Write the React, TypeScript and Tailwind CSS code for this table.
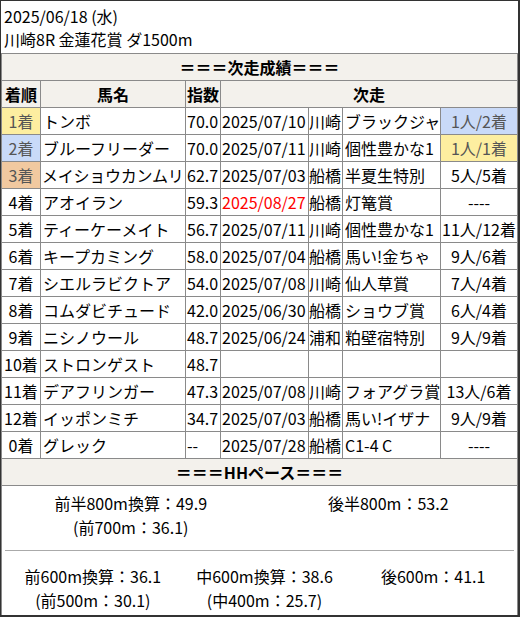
import React from "react";

type Row = {
  rank: string;
  rankBg?: string;
  name: string;
  tight?: boolean;
  idx: string;
  date: string;
  dateRed?: boolean;
  venue: string;
  race: string;
  result: string;
  resBg?: string;
};

const rows: Row[] = [
  { rank: "1着", rankBg: "bg-[#fdeea0] text-[#555]", name: "トンボ", idx: "70.0", date: "2025/07/10", venue: "川崎", race: "ブラックジャ", result: "1人/2着", resBg: "bg-[#c9daf8] text-[#555]" },
  { rank: "2着", rankBg: "bg-[#c9daf8] text-[#555]", name: "ブルーフリーダー", idx: "70.0", date: "2025/07/11", venue: "川崎", race: "個性豊かな1", result: "1人/1着", resBg: "bg-[#fdeea0] text-[#555]" },
  { rank: "3着", rankBg: "bg-[#f1c9a0] text-[#555]", name: "メイショウカンムリ", tight: true, idx: "62.7", date: "2025/07/03", venue: "船橋", race: "半夏生特別", result: "5人/5着" },
  { rank: "4着", name: "アオイラン", idx: "59.3", date: "2025/08/27", dateRed: true, venue: "船橋", race: "灯篭賞", result: "----" },
  { rank: "5着", name: "ティーケーメイト", idx: "56.7", date: "2025/07/11", venue: "川崎", race: "個性豊かな1", result: "11人/12着" },
  { rank: "6着", name: "キープカミング", idx: "58.0", date: "2025/07/04", venue: "船橋", race: "馬い!金ちゃ", result: "9人/6着" },
  { rank: "7着", name: "シエルラビクトア", idx: "54.0", date: "2025/07/08", venue: "川崎", race: "仙人草賞", result: "7人/4着" },
  { rank: "8着", name: "コムダビチュード", idx: "42.0", date: "2025/06/30", venue: "船橋", race: "ショウブ賞", result: "6人/4着" },
  { rank: "9着", name: "ニシノウール", idx: "48.7", date: "2025/06/24", venue: "浦和", race: "粕壁宿特別", result: "9人/9着" },
  { rank: "10着", name: "ストロンゲスト", idx: "48.7", date: "", venue: "", race: "", result: "" },
  { rank: "11着", name: "デアフリンガー", idx: "47.3", date: "2025/07/08", venue: "川崎", race: "フォアグラ賞", result: "13人/6着" },
  { rank: "12着", name: "イッポンミチ", idx: "34.7", date: "2025/07/03", venue: "船橋", race: "馬い!イザナ", result: "9人/9着" },
  { rank: "0着", name: "グレック", idx: "--", date: "2025/07/28", venue: "船橋", race: "C1-4 C", result: "----" },
];

const cell = "h-[26px] leading-[26px] whitespace-nowrap overflow-hidden";

export default function App() {
  return (
    <div
      className="w-[520px] h-[617px] bg-[#333] pt-px pl-px text-black text-[16px]"
      style={{ fontFamily: '"Noto Sans CJK JP", "Noto Sans", sans-serif' }}
    >
      <div className="w-[517px] h-[614px] bg-white flex flex-col">
        <div className="h-[52px] pl-[3px] pt-[4px] leading-[23px]">
          <div>2025/06/18 (水)</div>
          <div>川崎8R 金蓮花賞 ダ1500m</div>
        </div>
        <div className="grid grid-cols-[38px_144px_34px_87px_33px_97px_76px] gap-px bg-[#8a8a8a] p-px pb-0">
          <div className={`${cell} col-span-7 bg-[#f3f1ec] text-center font-bold`}>＝＝＝次走成績＝＝＝</div>
          <div className={`${cell} bg-[#f3f1ec] text-center font-bold`}>着順</div>
          <div className={`${cell} bg-[#f3f1ec] text-center font-bold`}>馬名</div>
          <div className={`${cell} bg-[#f3f1ec] text-center font-bold`}>指数</div>
          <div className={`${cell} col-span-4 bg-[#f3f1ec] text-center font-bold`}>次走</div>
          {rows.map((r, i) => (
            <React.Fragment key={i}>
              <div className={`${cell} text-center ${r.rankBg ?? "bg-white"}`}>{r.rank}</div>
              <div className={`${cell} bg-white ${r.tight ? "pl-px tracking-[-0.25px]" : "pl-[2px]"}`}>{r.name}</div>
              <div className={`${cell} bg-white pl-px`}>{r.idx}</div>
              <div className={`${cell} bg-white pl-px ${r.dateRed ? "text-[#ff0000]" : ""}`}>{r.date}</div>
              <div className={`${cell} bg-white`}>{r.venue}</div>
              <div className={`${cell} bg-white pl-[2px]`}>{r.race}</div>
              <div className={`${cell} text-center ${r.resBg ?? "bg-white"}`}>{r.result}</div>
            </React.Fragment>
          ))}
          <div className={`${cell} col-span-7 bg-[#f3f1ec] text-center font-bold`}>＝＝＝HHペース＝＝＝</div>
        </div>
        <div className="flex-1 border-x border-t border-[#8a8a8a] flex flex-col leading-[24px]">
          <div className="grid grid-cols-2 pt-[5px] h-[64px]">
            <div className="text-center">
              <div>前半800m換算：49.9</div>
              <div>(前700m：36.1)</div>
            </div>
            <div className="text-center">
              <div>後半800m：53.2</div>
            </div>
          </div>
          <div className="mx-[3px] h-px bg-[#aaa]" />
          <div className="grid grid-cols-3 pt-[13px]">
            <div className="text-center pl-[10px]">
              <div>前600m換算：36.1</div>
              <div>(前500m：30.1)</div>
            </div>
            <div className="text-center pl-[10px]">
              <div>中600m換算：38.6</div>
              <div>(中400m：25.7)</div>
            </div>
            <div className="text-center pl-[4px]">
              <div>後600m：41.1</div>
            </div>
          </div>
        </div>
      </div>
    </div>
  );
}
